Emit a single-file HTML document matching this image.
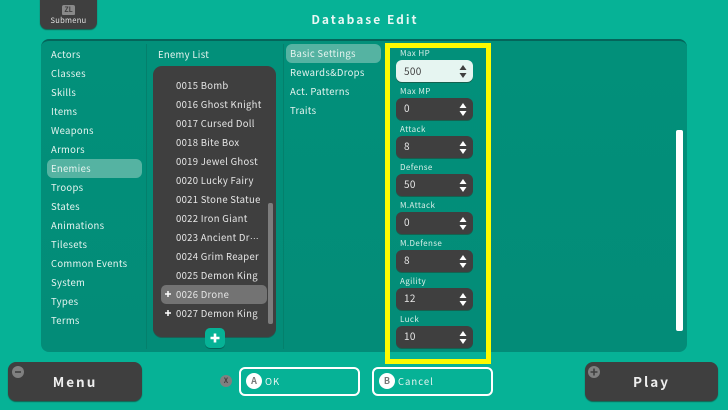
<!DOCTYPE html>
<html><head><meta charset="utf-8"><style>
*{box-sizing:border-box;margin:0;padding:0}
html,body{width:728px;height:410px;overflow:hidden}
body{position:relative;background:#06b296;font-family:"Noto Sans CJK JP","Liberation Sans",sans-serif;color:#e6f4f0;font-size:9.5px;letter-spacing:.3px;line-height:14px}
div{position:absolute;white-space:nowrap}
.panel{left:41px;top:39px;width:646px;height:313px;background:linear-gradient(#02907a,#038c78);border-radius:8px;border-top:2px solid #04655a}
.dv{top:44px;width:1px;height:305px;background:#04806c}
.t{left:51px}
.hl{background:#55b3a2;border-radius:6px}
.list{left:153px;top:66px;width:123px;height:271px;background:#3f3f3f;border-radius:9px;box-shadow:0 1px 0 #1d5f55}
.e{left:176px;color:#e6e6e6}
.lb{left:400px;font-size:8px;letter-spacing:.4px;color:#d7eee8}
.in{left:396px;width:77px;height:22px;background:#3f3f3f;border-radius:6px;box-shadow:0 1px 0 #15614f;color:#e8e8e8;padding:3px 0 0 8px;font-size:10px;letter-spacing:.3px}
.in.on{background:#e6f5f1;color:#3f3f3f;padding-top:4px}
.ar{position:absolute;left:63px;top:5px}
.btn{background:#3f3f3f;border-radius:8px;box-shadow:0 1px 1px #14604f}
.big{font-size:13.5px;font-weight:700;letter-spacing:2px;color:#eee;text-align:center;line-height:38px}
.c{border-radius:50%;background:#808080;color:#3f3f3f;text-align:center}
.o{top:367px;width:121px;height:29px;border:2px solid #fff;border-radius:6px}
.a{left:5px;top:4px;width:16px;height:16px;border-radius:50%;background:#fff;color:#777;text-align:center;font-size:9px;font-weight:700;line-height:16px;letter-spacing:0}
.ot{left:24px;top:5px;letter-spacing:1px}
</style></head><body>

<div class="btn" style="left:40px;top:-10px;width:57px;height:39px;border-radius:7px"></div>
<div style="left:62px;top:5px;width:13px;height:10px;background:#8a8a8a;border-radius:2px 2px 1px 1px;color:#3f3f3f;font-size:7px;font-weight:700;line-height:10px;text-align:center;letter-spacing:0">ZL</div>
<div style="left:40px;top:15px;width:57px;text-align:center;font-size:7.5px;letter-spacing:.3px;line-height:12px;color:#e4e4e4">Submenu</div>
<div style="left:265px;top:11px;width:200px;text-align:center;font-size:12px;font-weight:700;letter-spacing:2px;line-height:17px;color:#e9f7f4">Database Edit</div>

<div class="panel"></div>
<div class="dv" style="left:146px"></div>
<div class="dv" style="left:283px"></div>

<div class="hl" style="left:47px;top:159px;width:95px;height:19px"></div>
<div class="t" style="top:47px">Actors</div>
<div class="t" style="top:66px">Classes</div>
<div class="t" style="top:85px">Skills</div>
<div class="t" style="top:104px">Items</div>
<div class="t" style="top:123px">Weapons</div>
<div class="t" style="top:142px">Armors</div>
<div class="t" style="top:161px">Enemies</div>
<div class="t" style="top:180px">Troops</div>
<div class="t" style="top:199px">States</div>
<div class="t" style="top:218px">Animations</div>
<div class="t" style="top:237px">Tilesets</div>
<div class="t" style="top:256px">Common Events</div>
<div class="t" style="top:275px">System</div>
<div class="t" style="top:294px">Types</div>
<div class="t" style="top:313px">Terms</div>

<div style="left:158px;top:47px">Enemy List</div>
<div class="list"></div>
<div class="e" style="top:78px">0015 Bomb</div>
<div class="e" style="top:97px">0016 Ghost Knight</div>
<div class="e" style="top:116px">0017 Cursed Doll</div>
<div class="e" style="top:135px">0018 Bite Box</div>
<div class="e" style="top:154px">0019 Jewel Ghost</div>
<div class="e" style="top:173px">0020 Lucky Fairy</div>
<div class="e" style="top:192px">0021 Stone Statue</div>
<div class="e" style="top:211px">0022 Iron Giant</div>
<div class="e" style="top:230px">0023 Ancient Dr<span style="font-family:'Liberation Sans',sans-serif;letter-spacing:-.2px">···</span></div>
<div class="e" style="top:249px">0024 Grim Reaper</div>
<div class="e" style="top:268px">0025 Demon King</div>
<div style="left:161px;top:285px;width:106px;height:19px;background:#737373;border-radius:5px"></div>
<div class="e" style="top:287px">0026 Drone</div>
<div class="e" style="top:306px">0027 Demon King</div>
<div style="left:268px;top:203px;width:5px;height:121px;background:#7d7d7d;border-radius:2px"></div>
<svg style="position:absolute;left:162px;top:289px" width="12" height="30"><path d="M6 2v6M3 5h6M6 21v6M3 24h6" stroke="#fff" stroke-width="1.5"/></svg>
<div style="left:205px;top:328px;width:20px;height:20px;background:#06b296;border-radius:5px;box-shadow:0 1px 0 #04655a"></div>
<svg style="position:absolute;left:205px;top:328px" width="20" height="20"><path d="M10 5.5v9M5.5 10h9" stroke="#fff" stroke-width="2.6"/></svg>

<div class="hl" style="left:286px;top:44px;width:95px;height:19px"></div>
<div style="left:290px;top:46px">Basic Settings</div>
<div style="left:290px;top:65px">Rewards&amp;Drops</div>
<div style="left:290px;top:84px">Act. Patterns</div>
<div style="left:290px;top:103px">Traits</div>

<div class="lb" style="top:47px">Max HP</div>
<div class="in on" style="top:60px">500<svg class="ar" width="8" height="13"><path d="M4 0l3.5 5h-7zM.5 8h7L4 13z" fill="#3f3f3f"/></svg></div>
<div class="lb" style="top:85px">Max MP</div>
<div class="in" style="top:98px">0<svg class="ar" width="8" height="13"><path d="M4 0l3.5 5h-7zM.5 8h7L4 13z" fill="#fff"/></svg></div>
<div class="lb" style="top:123px">Attack</div>
<div class="in" style="top:136px">8<svg class="ar" width="8" height="13"><path d="M4 0l3.5 5h-7zM.5 8h7L4 13z" fill="#fff"/></svg></div>
<div class="lb" style="top:161px">Defense</div>
<div class="in" style="top:174px">50<svg class="ar" width="8" height="13"><path d="M4 0l3.5 5h-7zM.5 8h7L4 13z" fill="#fff"/></svg></div>
<div class="lb" style="top:199px">M.Attack</div>
<div class="in" style="top:212px">0<svg class="ar" width="8" height="13"><path d="M4 0l3.5 5h-7zM.5 8h7L4 13z" fill="#fff"/></svg></div>
<div class="lb" style="top:237px">M.Defense</div>
<div class="in" style="top:250px">8<svg class="ar" width="8" height="13"><path d="M4 0l3.5 5h-7zM.5 8h7L4 13z" fill="#fff"/></svg></div>
<div class="lb" style="top:275px">Agility</div>
<div class="in" style="top:288px">12<svg class="ar" width="8" height="13"><path d="M4 0l3.5 5h-7zM.5 8h7L4 13z" fill="#fff"/></svg></div>
<div class="lb" style="top:313px">Luck</div>
<div class="in" style="top:326px">10<svg class="ar" width="8" height="13"><path d="M4 0l3.5 5h-7zM.5 8h7L4 13z" fill="#fff"/></svg></div>

<div style="left:385px;top:43px;width:106px;height:321px;border:5px solid #fdfb00"></div>

<div style="left:676px;top:130px;width:7px;height:201px;background:#fff;border-radius:2px"></div>

<div class="btn big" style="left:8px;top:362px;width:134px;height:39px">Menu</div>
<div class="c" style="left:12px;top:366px;width:12px;height:12px"></div>
<svg style="position:absolute;left:12px;top:366px" width="12" height="12"><path d="M3 6h6" stroke="#3f3f3f" stroke-width="1.6"/></svg>

<div class="btn big" style="left:585px;top:362px;width:133px;height:39px">Play</div>
<div class="c" style="left:588px;top:366px;width:12px;height:12px"></div>
<svg style="position:absolute;left:588px;top:366px" width="12" height="12"><path d="M6 2.5v7M2.5 6h7" stroke="#3f3f3f" stroke-width="1.6"/></svg>

<div class="c" style="left:220px;top:375px;width:12px;height:12px;font-size:7px;font-weight:700;line-height:12px;letter-spacing:0">X</div>
<div class="o" style="left:239px"><div class="a">A</div><div class="ot">OK</div></div>
<div class="o" style="left:372px"><div class="a">B</div><div class="ot">Cancel</div></div>

</body></html>
